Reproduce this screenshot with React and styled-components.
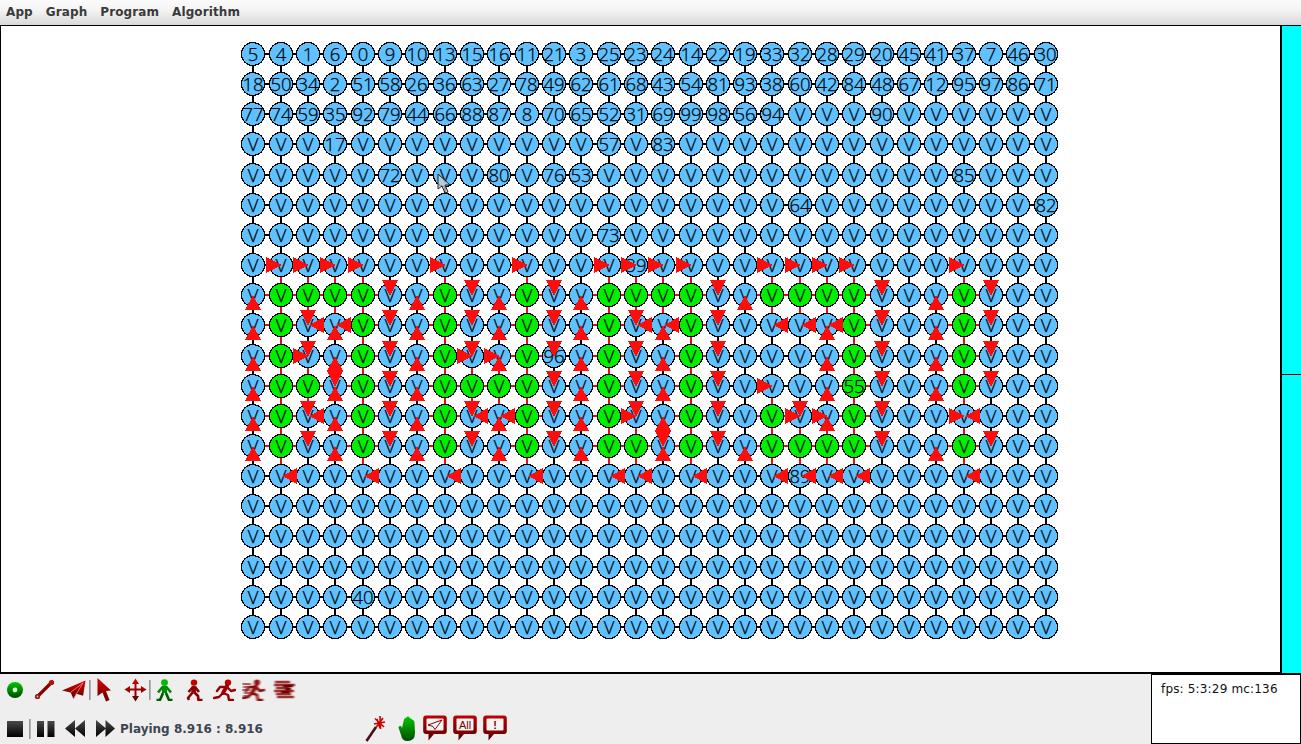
import React from "react";
import styled, { createGlobalStyle } from "styled-components";

const Global = createGlobalStyle`
  html, body { margin: 0; padding: 0; background: #eeeeee; overflow: hidden; }
  #root { width: 1301px; height: 744px; }
`;

const Page = styled.div`
  display: flex;
  flex-direction: column;
  width: 1301px;
  height: 744px;
  background: #eeeeee;
  font-family: "DejaVu Sans", sans-serif;
`;
const MenuBar = styled.div`
  display: flex;
  align-items: center;
  gap: 13px;
  height: 25px;
  padding: 0 6px 2px;
  box-sizing: border-box;
  background: linear-gradient(#fbfbfb, #f4f4f4 40%, #d9d9d9);
`;
const MenuItem = styled.span`
  font-size: 12px;
  font-weight: 700;
  color: #3a3a3a;
  letter-spacing: 0.1px;
`;
const Workspace = styled.div`
  display: flex;
  height: 648px;
`;
const Canvas = styled.div`
  flex: 1;
  background: #fff;
  border: solid #000;
  border-width: 1px 2px 1px 1px;
  overflow: hidden;
`;
const GraphSvg = styled.svg`
  display: block;
`;
const NodeLabel = styled.text`
  font-family: "Open Sans", "DejaVu Sans", sans-serif;
  font-size: 18.5px;
  font-weight: 300;
  fill: #000;
  stroke: #000;
  stroke-width: 0.25px;
  text-anchor: middle;
`;
const ScrollRail = styled.div`
  display: flex;
  flex-direction: column;
  width: 19px;
  background: #00ffff;
  border-top: 1px solid #000;
`;
const ScrollStop = styled.div`
  height: 348px;
  border-bottom: 1px solid #000;
  box-sizing: content-box;
`;
const BottomBar = styled.div`
  display: flex;
  flex: 1;
  justify-content: space-between;
  border-top: 1px solid #000;
`;
const Tools = styled.div`
  display: flex;
  flex-direction: column;
  gap: 14px;
  padding-top: 3px;
`;
const ToolRow = styled.div`
  display: flex;
  align-items: center;
  height: 25px;
`;
const ToolIcon = styled.svg`
  display: block;
  flex: none;
  margin-left: ${(p) => p.$ml || 0}px;
`;
const Separator = styled.div`
  flex: none;
  width: 2px;
  height: ${(p) => p.$h || 20}px;
  margin-left: ${(p) => p.$ml || 0}px;
  background: linear-gradient(90deg, #8a8a8a, #c4c4c4);
`;
const PlayText = styled.span`
  flex: none;
  margin-left: 5px;
  width: 145px;
  font-size: 12px;
  font-weight: 700;
  color: #3d4650;
  white-space: nowrap;
`;
const StatusBox = styled.div`
  width: 150px;
  box-sizing: border-box;
  height: 70px;
  background: #fff;
  border: 1px solid #000;
  padding: 7px 9px;
  font-size: 12px;
  letter-spacing: 0.17px;
  color: #111;
  white-space: nowrap;
`;

const ROWS = 20;
const COLS = 30;
const X = (c) => Math.floor(253.9 + 27.32 * c);
const Y = (r) => Math.round(54 + 30.15 * r);

const labelRows = [
  "5 4 1 6 0 9 10 13 15 16 11 21 3 25 23 24 14 22 19 33 32 28 29 20 45 41 37 7 46 30",
  "18 50 34 2 51 58 26 36 63 27 78 49 62 61 68 43 54 81 93 38 60 42 84 48 67 12 95 97 86 71",
  "77 74 59 35 92 79 44 66 88 87 8 70 65 52 31 69 99 98 56 94",
].map((s) => s.split(" "));
const extraLabels = {
  "2,23": "90", "3,3": "17", "3,13": "57", "3,15": "83", "4,5": "72", "4,9": "80", "4,11": "76",
  "4,12": "53", "4,26": "85", "5,20": "64", "5,29": "82", "6,13": "73", "7,14": "39",
  "10,11": "96", "11,22": "55", "14,20": "89", "18,4": "40",
};
const labelOf = (r, c) => (labelRows[r] && labelRows[r][c]) || extraLabels[`${r},${c}`] || "V";

const greens = {
  8: [1, 2, 3, 4, 7, 10, 13, 14, 15, 16, 19, 20, 21, 22, 26],
  9: [1, 4, 7, 10, 13, 16, 22, 26],
  10: [1, 4, 7, 10, 13, 16, 22, 26],
  11: [1, 2, 4, 7, 8, 9, 10, 13, 16, 22, 26],
  12: [1, 4, 7, 10, 13, 16, 19, 22],
  13: [1, 4, 7, 10, 13, 14, 16, 19, 20, 21, 22, 26],
};
const isGreen = (r, c) => !!greens[r] && greens[r].includes(c);

const arrows = {
  right: {
    7: [1, 2, 3, 4, 7, 10, 13, 14, 15, 16, 19, 20, 21, 22, 26],
    10: [2, 8, 9],
    11: [19],
    12: [14, 20, 21, 26],
  },
  left: {
    9: [2, 3, 14, 15, 19, 20, 21],
    12: [2, 8, 9, 26],
    14: [1, 4, 7, 10, 13, 14, 16, 19, 20, 21, 22, 26],
  },
  down: {
    8: [5, 8, 11, 17, 23, 27],
    9: [2, 5, 8, 11, 14, 17, 23, 27],
    10: [2, 5, 8, 11, 14, 17, 23, 27],
    11: [3, 5, 11, 14, 17, 23, 27],
    12: [2, 5, 8, 11, 14, 17, 20, 23],
    13: [2, 5, 8, 11, 15, 17, 23, 27],
  },
  up: {
    8: [0, 6, 9, 12, 18, 25],
    9: [0, 3, 6, 9, 12, 15, 21, 25],
    10: [0, 3, 6, 9, 12, 15, 21, 25],
    11: [0, 3, 6, 12, 15, 21, 25],
    12: [0, 3, 6, 9, 12, 15, 21],
    13: [0, 3, 6, 9, 12, 15, 18, 25],
  },
};
const arrowPoints = {
  right: (x, y) => `${x + 1},${y} ${x - 15},${y - 8} ${x - 15},${y + 8}`,
  left: (x, y) => `${x + 1},${y} ${x + 16},${y - 8} ${x + 16},${y + 8}`,
  down: (x, y) => `${x},${y + 1} ${x - 8},${y - 15} ${x + 8},${y - 15}`,
  up: (x, y) => `${x},${y} ${x - 8},${y + 15} ${x + 8},${y + 15}`,
};

function Graph() {
  const rows = [...Array(ROWS).keys()];
  const cols = [...Array(COLS).keys()];
  const edges = [];
  rows.forEach((r) =>
    cols.forEach((c) => {
      if (c < COLS - 1)
        edges.push({ k: `h${r}-${c}`, x1: X(c), y1: Y(r), x2: X(c + 1), y2: Y(r), red: isGreen(r, c) || isGreen(r, c + 1) });
      if (r < ROWS - 1)
        edges.push({ k: `v${r}-${c}`, x1: X(c), y1: Y(r), x2: X(c), y2: Y(r + 1), red: isGreen(r, c) || isGreen(r + 1, c) });
    })
  );
  const arrowList = [];
  Object.entries(arrows).forEach(([dir, byRow]) =>
    Object.entries(byRow).forEach(([r, list]) =>
      list.forEach((c) => arrowList.push({ k: `${dir}${r}-${c}`, pts: arrowPoints[dir](X(c), Y(+r)) }))
    )
  );
  return (
    <GraphSvg width="1278" height="646" viewBox="1 26 1278 646" shapeRendering="crispEdges">
      {edges.map((e) => (
        <line key={e.k} x1={e.x1} y1={e.y1} x2={e.x2} y2={e.y2} stroke={e.red ? "#e01010" : "#000"} strokeWidth="2.8" />
      ))}
      {rows.map((r) =>
        cols.map((c) => (
          <g key={`${r}-${c}`}>
            <circle cx={X(c)} cy={Y(r)} r="11.5" fill={isGreen(r, c) ? "#00ee00" : "#5fc1ff"} stroke="#000" strokeWidth="1.2" />
            <NodeLabel x={X(c)} y={Y(r) + 6.5}>{labelOf(r, c)}</NodeLabel>
          </g>
        ))
      )}
      {arrowList.map((a) => (
        <polygon key={a.k} points={a.pts} fill="#ff0d0d" />
      ))}
      <polygon points="438,174 438,189 442,186 445,193 448,192 445,185 450,185" fill="#d0d0d0" fillOpacity="0.75" stroke="#222" strokeWidth="1" shapeRendering="auto" />
    </GraphSvg>
  );
}

const Defs = () => (
  <svg width="0" height="0" style={{ position: "absolute" }}>
    <defs>
      <linearGradient id="redGrad" x1="0" y1="0" x2="0" y2="1">
        <stop offset="0" stopColor="#e00000" />
        <stop offset="1" stopColor="#5a0000" />
      </linearGradient>
      <linearGradient id="greenGrad" x1="0" y1="0" x2="0" y2="1">
        <stop offset="0" stopColor="#00c800" />
        <stop offset="1" stopColor="#004a00" />
      </linearGradient>
      <linearGradient id="blackGrad" x1="0" y1="0" x2="0" y2="1">
        <stop offset="0" stopColor="#4a4a4a" />
        <stop offset="1" stopColor="#000" />
      </linearGradient>
      <linearGradient id="bubbleGrad" x1="0" y1="0" x2="0" y2="1">
        <stop offset="0" stopColor="#c00000" />
        <stop offset="1" stopColor="#560000" />
      </linearGradient>
      <filter id="softBlur"><feGaussianBlur stdDeviation="0.8 0.4" /></filter>
      <filter id="heavyBlur"><feGaussianBlur stdDeviation="1.2 0.6" /></filter>
    </defs>
  </svg>
);

const RunnerPaths = ({ color, width = 3 }) => (
  <g fill="none" stroke={color} strokeWidth={width} strokeLinecap="round" strokeLinejoin="round">
    <path d="M14 7 L10 14" strokeWidth={width + 1.4} />
    <path d="M13 8 L7 8 L4 12" />
    <path d="M14 8 L18 12 L22 11" />
    <path d="M10 14 L6 18 L1 19" />
    <path d="M10 14 L15 16 L16 21 L20 21" />
  </g>
);

const Stick = () => (
  <>
    <circle cx="8.5" cy="3.6" r="3.4" fill="#00b800" />
    <g fill="none" strokeWidth="2.6" strokeLinejoin="round">
      <path d="M8.5 7 L8.5 14" stroke="#009000" strokeWidth="5" />
      <path d="M7 7.5 L2 13.5 M10 7.5 L15 13.5" stroke="#008800" />
      <path d="M7 14 L4 21 L0.5 21 M10 14 L13 21 L16.5 21" stroke="#005c00" />
    </g>
  </>
);

const Bubble = ({ ml, children }) => (
  <ToolIcon $ml={ml} width="24" height="27" viewBox="0 0 24 27">
    <path d="M3 0.5 H21 A3 3 0 0 1 23.8 3.5 V16 A3 3 0 0 1 21 19 H11 L5.5 25.5 V19 H3 A3 3 0 0 1 0.2 16 V3.5 A3 3 0 0 1 3 0.5 Z" fill="url(#bubbleGrad)" />
    <rect x="3.5" y="3.5" width="17" height="12" rx="1" fill="#f4f4f4" />
    {children}
  </ToolIcon>
);

const MenuText = ["App", "Graph", "Program", "Algorithm"];

export default function App() {
  return (
    <Page>
      <Global />
      <Defs />
      <MenuBar>
        {MenuText.map((m) => (
          <MenuItem key={m}>{m}</MenuItem>
        ))}
      </MenuBar>
      <Workspace>
        <Canvas>
          <Graph />
        </Canvas>
        <ScrollRail>
          <ScrollStop />
        </ScrollRail>
      </Workspace>
      <BottomBar>
        <Tools>
          <ToolRow>
            <ToolIcon $ml={7} width="16" height="16" viewBox="0 0 16 16">
              <circle cx="8" cy="8" r="8" fill="url(#greenGrad)" />
              <circle cx="8" cy="8" r="2.4" fill="#d8f8d8" />
            </ToolIcon>
            <ToolIcon $ml={11} width="21" height="21" viewBox="0 0 21 21">
              <path d="M3 18 L18 3" stroke="#8a0000" strokeWidth="3.2" strokeLinecap="round" />
              <circle cx="3.5" cy="17.5" r="2.6" fill="#8a1a1a" />
              <circle cx="17.5" cy="3.5" r="2.6" fill="#b01010" />
              <circle cx="3.5" cy="17.5" r="0.9" fill="#e8c8c8" />
            </ToolIcon>
            <ToolIcon $ml={7} width="24" height="20" viewBox="0 0 25 20">
              <path d="M24.5 0 L0 10.5 L9 12.5 L12 19.5 L15 14 L22 16 Z" fill="url(#redGrad)" />
              <path d="M22 2.5 L9 12.5 M22 2.5 L12 19" stroke="#eeb0b0" strokeWidth="0.7" />
            </ToolIcon>
            <Separator $ml={3} />
            <ToolIcon $ml={6} width="15" height="24" viewBox="0 0 15 24">
              <path d="M0.5 0 L14 12.5 L9 13 L12.5 22 L9 23.5 L5.5 14.5 L0.5 18 Z" fill="url(#redGrad)" />
            </ToolIcon>
            <ToolIcon $ml={12} width="23" height="24" viewBox="0 0 23 24">
              <path d="M11.5 0.5 L15 6 H12.5 V10.5 H17 V8 L22.5 11.5 L17 15 V12.5 H12.5 V18 H15 L11.5 23.5 L8 18 H10.5 V12.5 H6 V15 L0.5 11.5 L6 8 V10.5 H10.5 V6 H8 Z" fill="url(#redGrad)" />
            </ToolIcon>
            <Separator $ml={2} />
            <ToolIcon $ml={5} width="17" height="22" viewBox="0 0 17 22">
              <Stick />
            </ToolIcon>
            <ToolIcon $ml={13} width="17" height="22" viewBox="0 0 17 22">
              <circle cx="8" cy="3.6" r="3.2" fill="#c00000" />
              <g fill="none" stroke="#8c0000" strokeWidth="2.6" strokeLinejoin="round">
                <path d="M8 7 L7.5 13" strokeWidth="4.6" />
                <path d="M7 8 L2.5 13 M9 8 L13 13" />
                <path d="M7 13 L2 19 L3 21 M8 13 L12 17 L12.5 21 L16.5 21" />
              </g>
            </ToolIcon>
            <ToolIcon $ml={10} width="23" height="22" viewBox="0 0 23 22">
              <circle cx="15" cy="3.6" r="3.2" fill="#c00000" />
              <RunnerPaths color="#9a0000" width={2.4} />
            </ToolIcon>
            <ToolIcon $ml={6} width="24" height="22" viewBox="0 0 24 22">
              <g filter="url(#softBlur)">
                <circle cx="15" cy="3.6" r="3" fill="#a01010" />
                <RunnerPaths color="#8a1010" width={2.6} />
                <path d="M0 5 H9 M1 8 H7 M0 11 H8 M2 14 H9 M1 17 H6" stroke="#a03030" strokeWidth="1.5" />
              </g>
            </ToolIcon>
            <ToolIcon $ml={7} width="23" height="21" viewBox="0 0 23 21">
              <g filter="url(#heavyBlur)" stroke="#9c3030" strokeWidth="2.4" fill="none">
                <path d="M2 3 H17 M1 6 H22 M3 9 H16 M1 12 H21 M3 15 H18 M4 18 H21" />
                <path d="M10 7 H20 M8 13 H17 M12 10 H18" stroke="#6c0000" />
              </g>
            </ToolIcon>
          </ToolRow>
          <ToolRow>
            <ToolIcon $ml={7} width="16" height="16" viewBox="0 0 16 16">
              <rect width="16" height="16" fill="url(#blackGrad)" />
            </ToolIcon>
            <Separator $ml={6} />
            <ToolIcon $ml={6} width="18" height="16" viewBox="0 0 18 16">
              <rect width="7" height="16" fill="url(#blackGrad)" />
              <rect x="10.5" width="7" height="16" fill="url(#blackGrad)" />
            </ToolIcon>
            <ToolIcon $ml={10} width="20" height="17" viewBox="0 0 20 17">
              <path d="M10 0 V17 L0 8.5 Z M20 0 V17 L10 8.5 Z" fill="url(#blackGrad)" />
            </ToolIcon>
            <ToolIcon $ml={11} width="19" height="17" viewBox="0 0 19 17">
              <path d="M0 0 V17 L10 8.5 Z M9.5 0 V17 L19 8.5 Z" fill="url(#blackGrad)" />
            </ToolIcon>
            <PlayText>Playing 8.916 : 8.916</PlayText>
            <ToolIcon $ml={100} width="21" height="27" viewBox="0 0 21 27">
              <path d="M1.5 26 L11 12" stroke="#4a1010" strokeWidth="2.6" />
              <path d="M12 4 L15 13 M9 9 L20 7 M10 3.5 L19 12 M11 12.5 L18 3 M15 1 L15.5 14" stroke="#c80000" strokeWidth="1.6" />
            </ToolIcon>
            <ToolIcon $ml={12} width="18" height="25" viewBox="0 0 18 25">
              <path d="M6 3.5 Q6.5 1.5 8 2 Q8.5 0 10 0.5 Q11.5 0.5 12 2.5 Q14 2 14.5 4 Q16.5 4 16.5 7 L17 17 Q17 25 9.5 25 Q4 25 3 19 L0.5 11.5 Q0.5 9.5 3 10 L4 12 Z" fill="url(#greenGrad)" />
            </ToolIcon>
            <Bubble ml={7}>
              <path d="M19 5 L5 10 L10 11.5 L12 14.5 Z" fill="none" stroke="#900000" strokeWidth="1" />
            </Bubble>
            <Bubble ml={6}>
              <text x="12" y="14" textAnchor="middle" fontFamily="Liberation Sans" fontSize="11" fill="#7a0000">All</text>
            </Bubble>
            <Bubble ml={6}>
              <text x="12" y="14" textAnchor="middle" fontFamily="Liberation Sans" fontSize="11" fontWeight="700" fill="#8a0000">!</text>
            </Bubble>
          </ToolRow>
        </Tools>
        <StatusBox>fps: 5:3:29 mc:136</StatusBox>
      </BottomBar>
    </Page>
  );
}
